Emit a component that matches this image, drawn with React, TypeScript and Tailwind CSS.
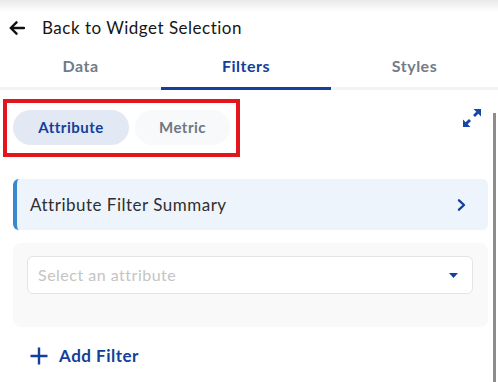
const font = { fontFamily: 'Lato, "Open Sans", sans-serif' };

const ExpandIcon = () => (
  <svg width="20" height="20" viewBox="0 0 20 20" fill="#1546a8">
    <path d="M11.5 1h7.5v7.5l-2.7-2.7-3.3 3.3-2-2 3.3-3.3z" />
    <path d="M8.5 19H1v-7.5l2.7 2.7 3.3-3.3 2 2-3.3 3.3z" />
  </svg>
);

const BackArrow = () => (
  <svg width="16" height="14" viewBox="0 0 16 14" fill="none" stroke="#111" strokeWidth="2.4" strokeLinecap="round" strokeLinejoin="round">
    <path d="M15 7H1.8M7.5 1.3 1.8 7l5.7 5.7" />
  </svg>
);

const Chevron = () => (
  <svg width="9" height="12" viewBox="0 0 9 12" fill="none" stroke="#12409a" strokeWidth="2.3" strokeLinecap="round" strokeLinejoin="round">
    <path d="M2 1.3 7 6l-5 4.7" />
  </svg>
);

const PlusIcon = () => (
  <svg width="18" height="18" viewBox="0 0 18 18" fill="none" stroke="#12409a" strokeWidth="2.4">
    <path d="M9 0.5v17M0.5 9h17" />
  </svg>
);

export default function App() {
  return (
    <div className="w-[498px] h-[382px] bg-white overflow-hidden tracking-[0.5px]" style={font}>
      <div className="h-3 bg-gradient-to-b from-[#e9e9e9] to-white" />
      <div className="flex items-center h-[32px] pl-[9px] gap-[17px] text-[#161616]">
        <BackArrow />
        <span className="text-[17px]">Back to Widget Selection</span>
      </div>
      <div className="flex h-[46px] border-b-[3px] border-[#f3f3f3] text-[16px] font-bold">
        <div className="w-[161px] flex items-center justify-center text-[#727b86] pt-[1px]">Data</div>
        <div className="w-[170px] flex items-center justify-center text-[#12409a] border-b-[3px] border-[#12409a] -mb-[3px] pt-[1px]">
          Filters
        </div>
        <div className="flex-1 flex items-center justify-center text-[#727b86] pt-[1px]">Styles</div>
      </div>
      <div className="flex">
        <div className="flex-1 pl-[13px] pr-[5px]">
          <div className="flex items-start justify-between">
            <div className="-ml-[10px] mt-[9px] border-[4px] border-[#e3161e] pl-[6px] pr-[6px] pt-[7px] pb-[8px] flex gap-[6px] w-[237px]">
              <div className="w-[116px] h-[35px] rounded-full bg-[#e2e9f5] flex items-center justify-center text-[15px] font-bold text-[#12409a]">
                Attribute
              </div>
              <div className="w-[95px] h-[35px] rounded-full bg-[#f8f9fb] flex items-center justify-center text-[15px] font-bold text-[#6f7781]">
                Metric
              </div>
            </div>
            <div className="mt-[18px] mr-[6px]">
              <ExpandIcon />
            </div>
          </div>
          <div className="mt-[22px] h-[51px] rounded-[6px] bg-[#eef4fc] border-l-[4px] border-[#3a86cf] flex items-center justify-between pl-[13px] pr-[22px]">
            <span className="text-[17px] text-[#2f2f2f]">Attribute Filter Summary</span>
            <Chevron />
          </div>
          <div className="mt-[13px] rounded-[8px] bg-[#f9f9f9] pt-[13px] pb-[33px] pl-[14px] pr-[15px]">
            <div className="h-[38px] rounded-[6px] bg-white border border-[#e4e4e4] flex items-center justify-between pl-[10px] pr-[14px]">
              <span className="text-[16px] text-[#c4c4c4]">Select an attribute</span>
              <svg width="9" height="5" viewBox="0 0 9 5">
                <path d="M0 0h9L4.5 5z" fill="#12409a" />
              </svg>
            </div>
          </div>
          <div className="flex items-center gap-[11px] pl-[17px] mt-[16px] text-[#12409a]">
            <PlusIcon />
            <span className="text-[17px] font-bold">Add Filter</span>
          </div>
        </div>
        <div className="w-[5px] pt-[23px]">
          <div className="w-[3px] h-[300px] bg-[#8c8c8c]" />
        </div>
      </div>
    </div>
  );
}
